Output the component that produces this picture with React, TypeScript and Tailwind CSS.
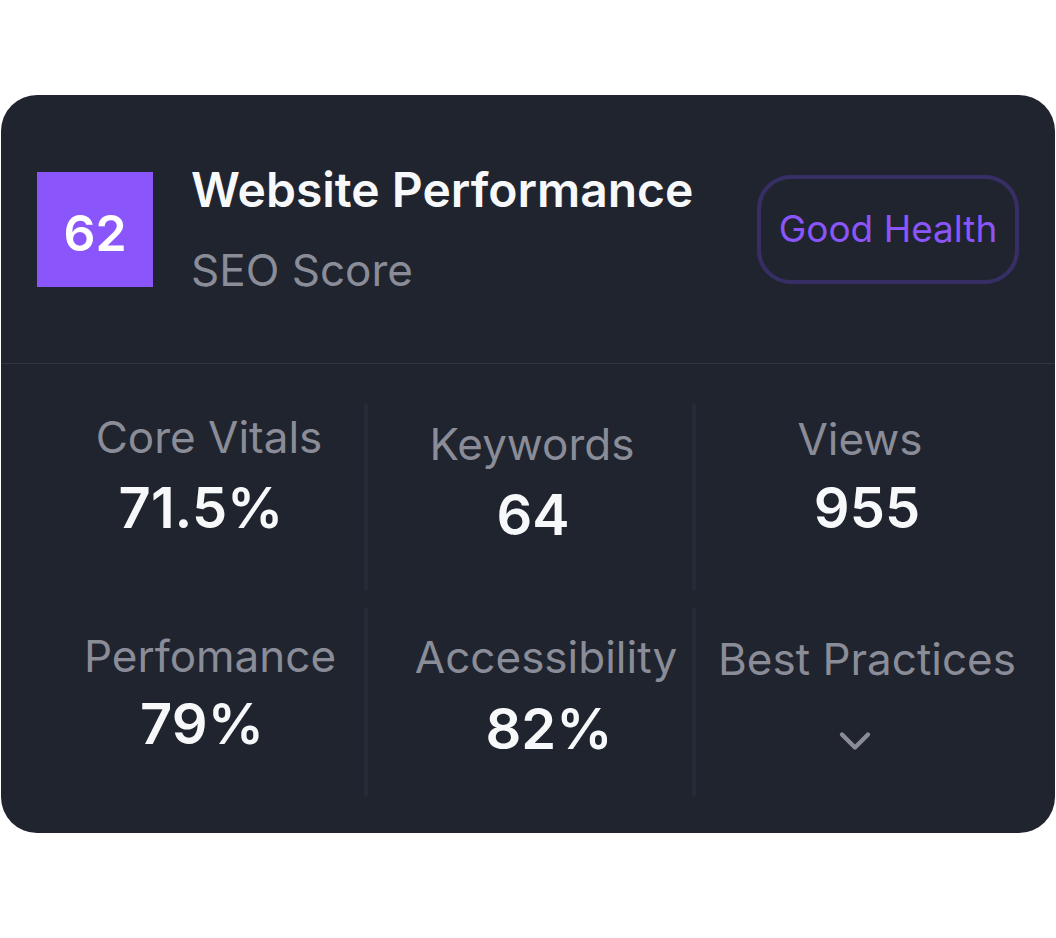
import { ChevronDown } from "lucide-react";

type Stat = {
  label: string;
  value?: string;
  wrap: string; // shifts the label column
  gap: string; // space between label and value
  shift: string; // nudges the value under the label
};

const stats: Stat[] = [
  { label: "Core Vitals", value: "71.5%", wrap: "pt-[47px] pl-[51px]", gap: "mt-[13px]", shift: "mr-[16px]" },
  { label: "Keywords", value: "64", wrap: "pt-[54px] pl-[4px]", gap: "mt-[13px]", shift: "ml-[2px]" },
  { label: "Views", value: "955", wrap: "pt-[49px] pr-[29px]", gap: "mt-[11px]", shift: "ml-[14px]" },
  { label: "Perfomance", value: "79%", wrap: "pt-[23px] pl-[53px]", gap: "mt-[10px]", shift: "mr-[16px]" },
  { label: "Accessibility", value: "82%", wrap: "pt-[24px] pl-[32px]", gap: "mt-[14px]", shift: "ml-[6px]" },
  { label: "Best Practices", wrap: "pt-[26px] pr-[15px]", gap: "mt-[30px]", shift: "mr-[24px]" },
];

function StatCell({ stat, index }: { stat: Stat; index: number }) {
  const topRow = index < 3;
  return (
    <div className="relative flex flex-col items-center">
      {index % 3 !== 0 && (
        <div
          className={`absolute -left-[2px] w-[4px] rounded-full bg-[#262a36] ${
            topRow ? "top-[39px] bottom-[16px]" : "top-[0px] bottom-[36px]"
          }`}
        />
      )}
      <div className={`flex flex-col items-center ${stat.wrap}`}>
        <span className="whitespace-nowrap text-[44px] leading-[52px] text-[#8a8c98]">
          {stat.label}
        </span>
        {stat.value ? (
          <span
            className={`text-[56px] font-semibold leading-[64px] text-[#f7f8fa] ${stat.gap} ${stat.shift}`}
          >
            {stat.value}
          </span>
        ) : (
          <ChevronDown
            className={`text-[#8a8c98] ${stat.gap} ${stat.shift}`}
            size={52}
            strokeWidth={2}
          />
        )}
      </div>
    </div>
  );
}

export default function App() {
  return (
    <div
      className="h-[938px] w-[1056px] bg-white pt-[95px] pl-[1px]"
      style={{ fontFamily: "Inter, 'Noto Sans', sans-serif" }}
    >
      <div className="h-[738px] w-[1054px] overflow-hidden rounded-[36px] bg-[#20242e]">
        <div className="flex h-[269px] items-center border-b border-[#30343e] pl-[36px] pr-[36px]">
          <div className="flex h-[115px] w-[116px] items-center justify-center bg-[#8a55fa] pt-[8px] text-[50px] font-semibold text-white">
            62
          </div>
          <div className="ml-[38px] flex flex-1 flex-col">
            <span className="whitespace-nowrap text-[48px] font-semibold leading-[56px] text-[#f7f8fa]">
              Website Performance
            </span>
            <span className="mt-[26px] text-[44px] leading-[52px] text-[#8a8c98]">
              SEO Score
            </span>
          </div>
          <div className="flex h-[109px] w-[262px] items-center justify-center rounded-[34px] border-[4px] border-[#372e66] text-[37px] text-[#8a55fa]">
            Good Health
          </div>
        </div>
        <div className="grid h-[469px] grid-cols-[365px_328px_1fr] grid-rows-[243px_226px]">
          {stats.map((s, i) => (
            <StatCell key={s.label} stat={s} index={i} />
          ))}
        </div>
      </div>
    </div>
  );
}
